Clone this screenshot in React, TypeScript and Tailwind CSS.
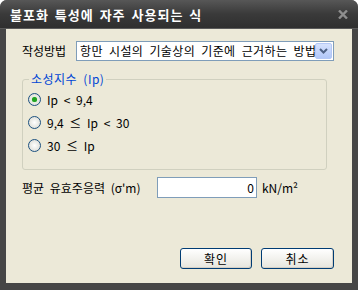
const FONT = { fontFamily: '"Noto Sans CJK KR", "Noto Sans", sans-serif' };

function Radio({ checked, label }: { checked?: boolean; label: string }) {
  return (
    <div className="flex items-center h-[13px]">
      <span className="w-[13px] h-[13px] rounded-full border border-[#1C5180] bg-radial from-white to-[#D6D6CE] flex items-center justify-center shrink-0">
        {checked && <span className="w-[5px] h-[5px] rounded-full bg-[#21A121] shadow-[0_0_1px_#5CD85C]" />}
      </span>
      <span className="ml-[6px] text-[12px] leading-none text-black">{label}</span>
    </div>
  );
}

function XpButton({ label, w }: { label: string; w: string }) {
  return (
    <button
      className={`${w} h-[21px] rounded-[3px] border border-[#003C74] bg-linear-to-b from-white to-[#E6E5DD] shadow-[inset_-1px_-1px_0_#D6D0C5] text-[12px] leading-none text-black tracking-[1px]`}
    >
      {label}
    </button>
  );
}

export default function App() {
  return (
    <div className="w-[358px] h-[291px] bg-white [word-spacing:3px]" style={FONT}>
      <div className="h-[290px] rounded-t-[7px] bg-[#464646] flex flex-col overflow-hidden">
        {/* 타이틀 바 */}
        <div className="h-[29px] shrink-0 flex items-center justify-between pl-[10px] pr-[10px] bg-linear-to-b from-[#575757] via-[#3a3a3a] to-[#2f2f2f] border-b border-[#5a5a5a]">
          <span className="text-white font-bold text-[13px] leading-none tracking-[1px] [word-spacing:2px]">
            불포화 특성에 자주 사용되는 식
          </span>
          <svg width="10" height="9" viewBox="0 0 10 9" className="mt-[1px]">
            <path d="M1 0.5 L9 8.5 M9 0.5 L1 8.5" stroke="#8E8E8E" strokeWidth="2.4" />
          </svg>
        </div>

        {/* 본문 */}
        <div className="flex-1 mx-[6px] mb-[7px] bg-[#ECE9D8] flex flex-col pl-[16px] pr-[18px] pt-[12px] pb-[14px]">
          <div className="flex items-center h-[20px]">
            <span className="w-[56px] text-[12px] leading-none text-black">작성방법</span>
            <div className="w-[258px] h-[20px] border border-[#7F9DB9] bg-white flex items-center">
              <span className="flex-1 pl-[3px] text-[12px] leading-none text-black whitespace-nowrap overflow-hidden tracking-[0.4px]">
                항만 시설의 기술상의 기준에 근거하는 방법
              </span>
              <span className="w-[17px] h-[16px] mr-[1px] rounded-[2px] border border-[#B4C8F6] bg-linear-to-b from-[#D6E2FD] to-[#B1C7F8] flex items-center justify-center shrink-0">
                <svg width="9" height="6" viewBox="0 0 9 6">
                  <path d="M1 1 L4.5 4.5 L8 1" fill="none" stroke="#4D6185" strokeWidth="2" />
                </svg>
              </span>
            </div>
          </div>

          {/* 소성지수 그룹 */}
          <div className="relative mt-[18px] w-[305px] h-[91px] border border-[#D0D0BF] rounded-[3px] pl-[5px] pt-[13px] flex flex-col gap-[10px]">
            <span className="absolute -top-[9px] left-[6px] px-[2px] bg-[#ECE9D8] text-[12px] leading-[16px] text-[#0046D5] tracking-[0.5px]">
              소성지수 (Ip)
            </span>
            <Radio checked label="Ip < 9,4" />
            <Radio label="9,4 ≤ Ip < 30" />
            <Radio label="30 ≤ Ip" />
          </div>

          <div className="mt-[7px] flex items-center h-[21px]">
            <span className="w-[135px] text-[12px] leading-none text-black">평균 유효주응력 (σ'm)</span>
            <div className="w-[100px] h-[21px] border border-[#7F9DB9] bg-white flex items-center justify-end pr-[2px] text-[12px] leading-none text-black">
              0
            </div>
            <span className="ml-[5px] text-[12px] leading-none text-black">kN/m²</span>
          </div>

          <div className="mt-auto flex justify-end gap-[9px]">
            <XpButton label="확인" w="w-[72px]" />
            <XpButton label="취소" w="w-[73px]" />
          </div>
        </div>
      </div>
    </div>
  );
}
